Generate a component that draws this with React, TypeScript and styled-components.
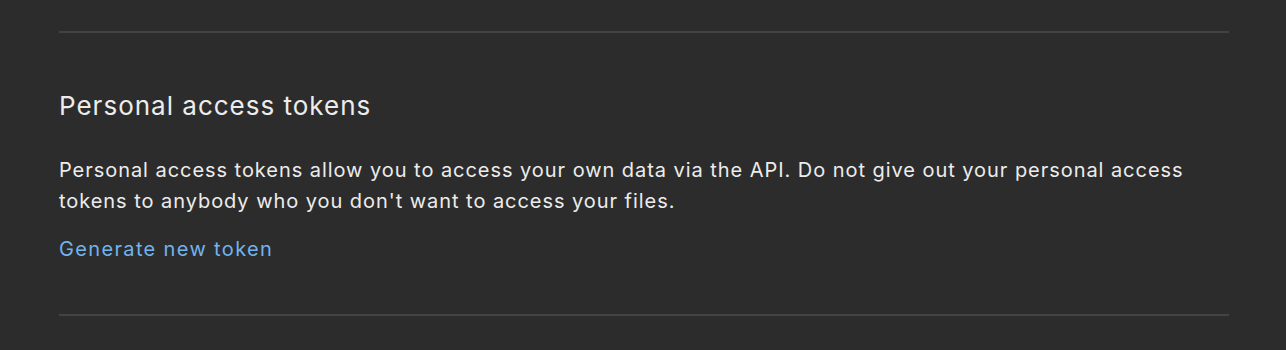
import styled, { createGlobalStyle } from "styled-components";

const GlobalStyle = createGlobalStyle`
  html, body {
    margin: 0;
    padding: 0;
    background-color: #2c2c2c;
    font-family: Inter, "Noto Sans", sans-serif;
  }
`;

function App() {
  return (
    <>
      <GlobalStyle />
      <Page>
        <Section>
          <h2 className="title">Personal access tokens</h2>
          <p className="description">
            Personal access tokens allow you to access your own data via the
            API. Do not give out your personal access tokens to anybody who you
            don't want to access your files.
          </p>
          <a className="generate-link" href="#">
            Generate new token
          </a>
        </Section>
      </Page>
    </>
  );
}

export default App;

const Page = styled.main`
  padding: 31px 57px 0 59px;
  height: 350px;
  box-sizing: border-box;
`;

const Section = styled.section`
  display: flex;
  flex-direction: column;
  align-items: flex-start;
  border-top: 2px solid #434343;
  border-bottom: 2px solid #434343;
  padding: 57px 0 49px;
  color: #ececec;
  .title {
    margin: 0;
    font-size: 26px;
    font-weight: 400;
    line-height: 32px;
    letter-spacing: 1px;
  }
  .description {
    margin: 33px 0 0;
    font-size: 20px;
    font-weight: 400;
    line-height: 31px;
    letter-spacing: 0.95px;
  }
  .generate-link {
    margin-top: 17px;
    font-size: 20px;
    line-height: 31px;
    letter-spacing: 1.35px;
    color: #72b3ee;
    text-decoration: none;
  }
`;
